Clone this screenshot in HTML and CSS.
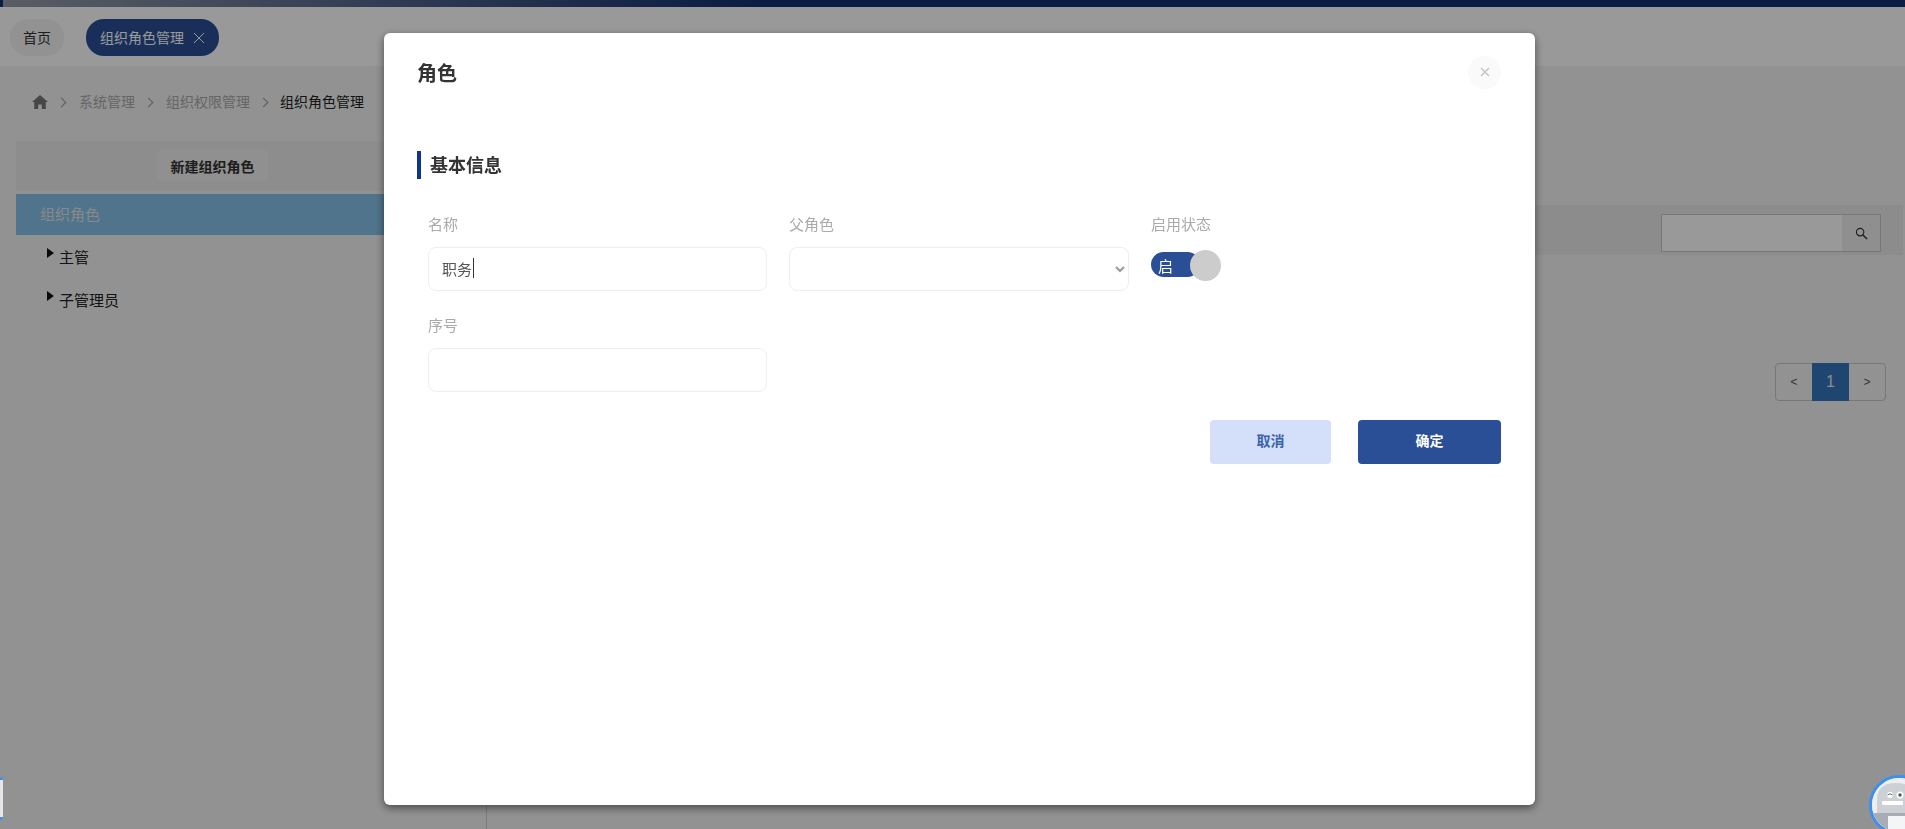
FILE: index.html
```html
<!DOCTYPE html>
<html lang="zh-CN">
<head>
    <meta charset="UTF-8">
    <meta name="viewport" content="width=device-width, initial-scale=1.0">
    <title>组织角色管理</title>
    <link rel="stylesheet" href="styles.css">
</head>
<body>
    <div class="top-bar"></div>

    <div class="tab-bar">
        <div class="tab">首页</div>
        <div class="tab tab_active">
            组织角色管理
            <svg class="tab-close" width="12" height="12" viewBox="0 0 12 12"><path d="M1 1l10 10M11 1L1 11" stroke="#fff" stroke-width="1" fill="none"/></svg>
        </div>
    </div>

    <div class="breadcrumb">
        <svg class="home-icon" width="16" height="14" viewBox="0 0 16 14"><path d="M8 0L0 7h2.2v7h4v-4.500h3.600V14h4V7H16z" fill="#777"/></svg>
        <span class="crumb-sep"></span>
        <span class="crumb">系统管理</span>
        <span class="crumb-sep"></span>
        <span class="crumb">组织权限管理</span>
        <span class="crumb-sep"></span>
        <span class="crumb crumb_current">组织角色管理</span>
    </div>

    <div class="content">
        <div class="side-panel">
            <div class="side-head">
                <button class="new-button">新建组织角色</button>
            </div>
            <div class="tree-root">组织角色</div>
            <div class="tree-item">主管</div>
            <div class="tree-item">子管理员</div>
        </div>
        <div class="main-panel">
            <div class="search-strip">
                <div class="search-box">
                    <input class="search-input" type="text">
                    <div class="search-button">
                        <svg width="13" height="13" viewBox="0 0 14 14"><circle cx="5.500" cy="5.500" r="4" stroke="#333" stroke-width="1.200" fill="none"/><path d="M8.500 8.500L13 13" stroke="#333" stroke-width="1.500"/></svg>
                    </div>
                </div>
            </div>
            <div class="pagination">
                <span class="page-item">&lt;</span>
                <span class="page-item page-item_current">1</span>
                <span class="page-item">&gt;</span>
            </div>
        </div>
    </div>

    <!-- dialog -->
    <div class="overlay">
        <div class="dialog">
            <div class="dialog-head">
                <h1>角色</h1>
                <div class="dialog-close">
                    <svg width="10" height="10" viewBox="0 0 10 10"><path d="M1 1l8 8M9 1L1 9" stroke="#c4c4c4" stroke-width="1.500" fill="none"/></svg>
                </div>
            </div>
            <h2 class="section-title">基本信息</h2>
            <div class="form-grid">
                <div class="field">
                    <label>名称</label>
                    <div class="form-input form-input_active">职务<span class="caret"></span></div>
                </div>
                <div class="field">
                    <label>父角色</label>
                    <select class="form-input form-select"><option></option></select>
                </div>
                <div class="field">
                    <label>启用状态</label>
                    <div class="toggle">
                        <span class="toggle-text">启</span>
                        <span class="toggle-knob"></span>
                    </div>
                </div>
                <div class="field">
                    <label>序号</label>
                    <input class="form-input" type="text">
                </div>
            </div>
            <div class="form-actions">
                <button class="btn btn_cancel">取消</button>
                <button class="btn btn_ok">确定</button>
            </div>
        </div>
    </div>

    <!-- chat bubbles at the window edges -->
    <div class="bubble bubble_left"></div>
    <div class="bubble bubble_right">
        <svg width="54" height="54" viewBox="0 0 54 54">
            <rect width="54" height="54" fill="#eceef0"/>
            <path d="M5 54V22Q5 5 24 5T43 22V54z" fill="#cdd0d5"/>
            <path d="M0 35h54v19H0z" fill="#a9adb3"/>
            <rect x="16" y="38" width="20" height="16" fill="#f4f5f6"/>
            <circle cx="18" cy="17" r="3" fill="#fff"/>
            <path d="M15.500 17q2.500-2.500 5 0" stroke="#666" stroke-width="1" fill="none"/>
            <circle cx="28" cy="17" r="3.500" fill="#fff"/>
            <circle cx="28" cy="17" r="1.700" fill="#555"/>
            <rect x="10" y="23" width="21" height="4" rx="1" fill="#fff"/>
        </svg>
    </div>
</body>
</html>
```

FILE: styles.css
```css
* {
    box-sizing: border-box;
}

body {
    font-family: "Liberation Sans", "Noto Sans CJK SC", sans-serif;
    font-size: 14px;
    background-color: #f3f3f3;
    color: #333333;
    margin: 0;
    height: 100vh;
    overflow: hidden;
    display: flex;
    flex-direction: column;
}

.top-bar {
    height: 7px;
    background: linear-gradient(90deg, #112f6e 3px, #949ba8 3px, #112f6e 40%);
}

/* Tabs */
.tab-bar {
    height: 59px;
    background-color: #ffffff;
    padding: 12px 10px 0;
    display: flex;
    align-items: flex-start;
    gap: 22px;
}

.tab {
    height: 37px;
    padding: 0 13px 2px;
    border-radius: 18px;
    background-color: #f4f4f4;
    display: flex;
    align-items: center;
}

.tab_active {
    padding: 0 14px 2px;
    background-color: #2b4f96;
    color: #ffffff;
}

.tab-close {
    margin: 2px 0 0 9px;
}

/* Breadcrumb */
.breadcrumb {
    height: 75px;
    padding: 0 0 6px 32px;
    display: flex;
    align-items: center;
    color: #aaaaaa;
}

.home-icon {
    margin-top: 2px;
}

.crumb-sep {
    width: 7px;
    height: 7px;
    margin: 3px 14px 0 10px;
    border-top: 1.5px solid #999999;
    border-right: 1.5px solid #999999;
    transform: rotate(45deg);
}

.crumb_current {
    margin-left: -1px;
    color: #222222;
}

/* Content */
.content {
    flex: 1;
    display: flex;
    padding: 0 2px 0 16px;
}

.side-panel {
    width: 471px;
    border-right: 1px solid #cfcfcf;
}

.side-head {
    height: 50px;
    background-color: #ececec;
    margin-bottom: 3px;
    padding: 9px 0 0 141px;
}

.new-button {
    width: 111px;
    height: 32px;
    border: none;
    border-radius: 4px;
    background-color: #f0f0f0;
    color: #333333;
    font-family: inherit;
    font-size: 14px;
    font-weight: bold;
}

.tree-root {
    height: 41px;
    line-height: 41px;
    padding-left: 24px;
    font-size: 15px;
    background-color: #84c1ea;
    color: #e4e4e4;
}

.tree-item {
    position: relative;
    padding-left: 43px;
    height: 43px;
    line-height: 43px;
    font-size: 15px;
    color: #222222;
}

.tree-root + .tree-item {
    margin-top: 1px;
}

.tree-item:before {
    content: "";
    position: absolute;
    left: 31px;
    top: 12px;
    border-left: 7px solid #111111;
    border-top: 5px solid transparent;
    border-bottom: 5px solid transparent;
}

.main-panel {
    flex: 1;
    padding-top: 64px;
    display: flex;
    flex-direction: column;
}

.search-strip {
    height: 50px;
    background-color: #e9e9e9;
    padding: 9px 22px 0 0;
    display: flex;
    justify-content: flex-end;
}

.search-box {
    width: 220px;
    height: 38px;
    border: 1px solid #c6c6c6;
    display: flex;
}

.search-input {
    flex: 1;
    min-width: 0;
    border: none;
    background-color: #ffffff;
}

.search-button {
    width: 38px;
    background-color: #eeeeee;
    display: flex;
    align-items: center;
    justify-content: center;
}

.pagination {
    align-self: flex-end;
    margin: 108px 17px 0 0;
    height: 38px;
    border: 1px solid #c6c6c6;
    border-radius: 4px;
    display: flex;
}

.page-item {
    width: 36px;
    display: flex;
    align-items: center;
    justify-content: center;
    font-size: 12px;
    color: #555555;
}

.page-item_current {
    width: 37px;
    font-size: 16px;
    margin: -1px 0;
    background-color: #3375bb;
    color: #e8e8e8;
}

/* Dialog */
.overlay {
    position: fixed;
    top: 0;
    left: 0;
    right: 0;
    bottom: 0;
    background-color: rgba(0, 0, 0, 0.4);
}

.dialog {
    width: 1151px;
    height: 772px;
    margin: 33px 0 0 384px;
    padding: 19px 34px 0 33px;
    background-color: #ffffff;
    border-radius: 6px;
    box-shadow: 0 3px 9px rgba(0, 0, 0, 0.5);
}

.dialog-head {
    display: flex;
    align-items: center;
    justify-content: space-between;
    height: 40px;
}

.dialog-head h1 {
    margin: 0;
    font-size: 20px;
    font-weight: bold;
    color: #333333;
}

.dialog-close {
    width: 33px;
    height: 33px;
    border-radius: 50%;
    background-color: #fafafa;
    display: flex;
    align-items: center;
    justify-content: center;
}

.section-title {
    margin: 59px 0 0;
    height: 28px;
    line-height: 30px;
    padding-left: 9px;
    border-left: 4px solid #0d3490;
    font-size: 18px;
    font-weight: bold;
    color: #333333;
}

.form-grid {
    display: grid;
    grid-template-columns: 339px 340px 1fr;
    column-gap: 22px;
    row-gap: 25px;
    margin: 36px 0 0 11px;
}

.field {
    display: flex;
    flex-direction: column;
}

.field label {
    height: 20px;
    line-height: 20px;
    margin-bottom: 12px;
    font-size: 15px;
    color: #aaaaaa;
}

.form-input {
    display: block;
    width: 100%;
    height: 44px;
    padding: 0 13px;
    border: 1px solid #eeeeee;
    border-radius: 8px;
    background-color: #ffffff;
    font-family: inherit;
    font-size: 15px;
    color: #555555;
    outline: none;
}

.form-input_active {
    display: flex;
    align-items: center;
    padding-bottom: 2px;
}

.caret {
    width: 1px;
    height: 20px;
    margin-left: 1px;
    background-color: #333333;
}

.form-select {
    padding-right: 4px;
    color: #999999;
}

.toggle {
    position: relative;
    width: 49px;
    height: 25px;
    margin: 5px 0 0;
    padding-left: 7px;
    border-radius: 13px;
    background-color: #2b4f96;
    color: #ffffff;
    font-size: 15px;
    line-height: 30px;
}

.toggle-knob {
    position: absolute;
    top: -2px;
    right: -21px;
    width: 31px;
    height: 31px;
    border-radius: 50%;
    background-color: #cccccc;
}

.form-actions {
    display: flex;
    justify-content: flex-end;
    gap: 27px;
    margin-top: 28px;
}

.btn {
    height: 44px;
    padding: 0 0 5px;
    border: none;
    border-radius: 4px;
    font-family: inherit;
    font-size: 14px;
    font-weight: bold;
}

.btn_cancel {
    width: 121px;
    background-color: #d4dffa;
    color: #3d62a8;
}

.btn_ok {
    width: 143px;
    background-color: #2b4f96;
    color: #ffffff;
}

/* Chat bubbles */
.bubble {
    position: fixed;
    overflow: hidden;
    background-color: #e4e6ea;
    border: 3px solid #3b8ff0;
}

.bubble_right {
    left: 1869px;
    top: 775px;
    width: 60px;
    height: 60px;
    border-radius: 50%;
}

.bubble_left {
    left: 0;
    top: 777px;
    width: 3px;
    height: 43px;
    border-width: 3px 0;
    border-radius: 0 3px 3px 0;
}
```
